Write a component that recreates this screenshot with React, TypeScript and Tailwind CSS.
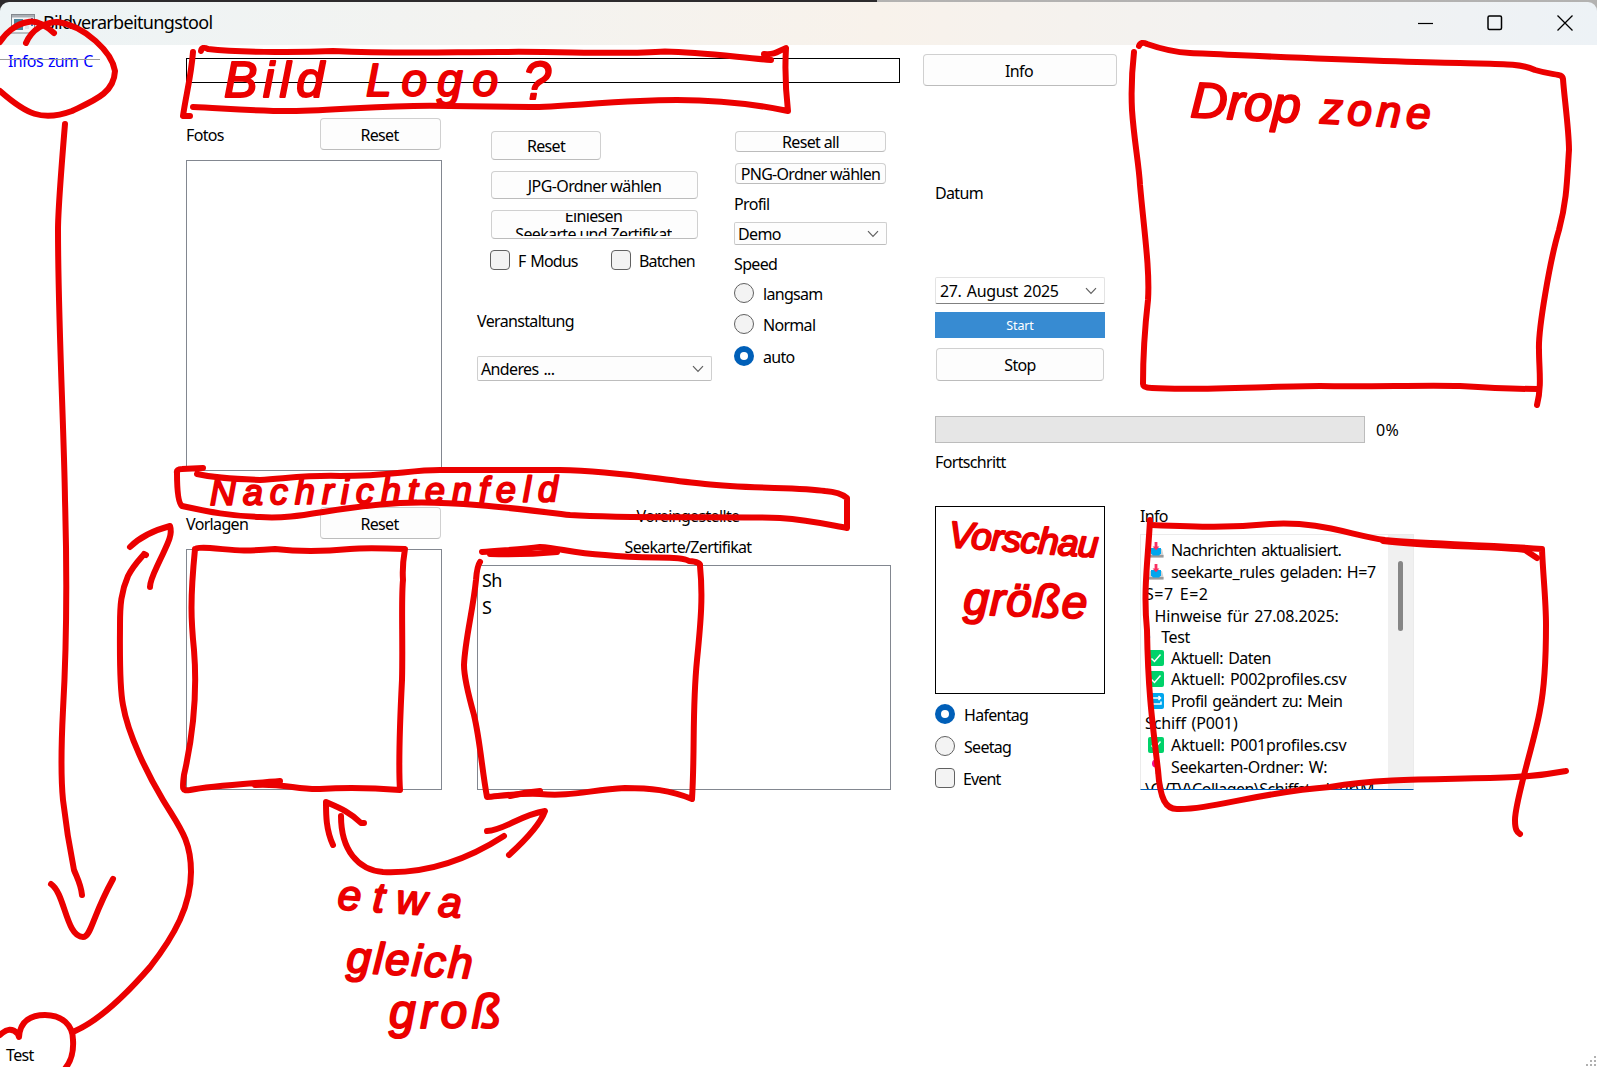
import React from "react";

function Btn({ className = "", children }: { className?: string; children: React.ReactNode }) {
  return (
    <button
      className={`flex items-center justify-center overflow-hidden whitespace-nowrap rounded-[4px] border border-[#d0d0d0] border-b-[#bcbcbc] bg-[#fdfdfd] ${className}`}
    >
      {children}
    </button>
  );
}

function Label({ className = "", children }: { className?: string; children: React.ReactNode }) {
  return <div className={`h-5 whitespace-nowrap leading-5 ${className}`}>{children}</div>;
}

function Chevron() {
  return (
    <svg width="12" height="8" viewBox="0 0 12 8" fill="none" stroke="#606060" strokeWidth="1.2">
      <path d="M1 1.2 6 6.4 11 1.2" />
    </svg>
  );
}

function Combo({ className = "", children }: { className?: string; children: React.ReactNode }) {
  return (
    <div
      className={`flex items-center justify-between whitespace-nowrap rounded-[2px] border border-[#cfcfcf] border-b-[#bdbdbd] bg-[#fdfdfd] pl-[3px] pr-[7px] ${className}`}
    >
      <span>{children}</span>
      <Chevron />
    </div>
  );
}

function Radio({ on = false, className = "", children }: { on?: boolean; className?: string; children: React.ReactNode }) {
  return (
    <label className={`flex h-5 items-center gap-[9px] whitespace-nowrap leading-5 ${className}`}>
      {on ? (
        <span className="flex size-5 items-center justify-center rounded-full bg-[#005fb8]">
          <span className="size-2 rounded-full bg-white" />
        </span>
      ) : (
        <span className="size-5 rounded-full border border-[#616161] bg-[#f3f3f3]" />
      )}
      <span className="pt-0.5 tracking-[-0.7px]">{children}</span>
    </label>
  );
}

function Check({ className = "", children }: { className?: string; children: React.ReactNode }) {
  return (
    <label className={`flex h-5 items-center gap-2 whitespace-nowrap leading-5 ${className}`}>
      <span className="size-5 rounded-[4px] border border-[#616161] bg-[#f3f3f3]" />
      <span className="pt-0.5 tracking-[-0.85px]">{children}</span>
    </label>
  );
}

function InboxIcon() {
  return (
    <svg width="16" height="16" viewBox="0 0 16 16">
      <path d="M2 7 0.5 13v2.5h15V13L14 7z" fill="#d3d3d3" />
      <path d="M0.5 13h15v2.5H0.5z" fill="#9b9b9b" />
      <path d="M3 6h10v5.500L11 13.500H5l-2-2z" fill="#00a6ed" />
      <path d="M6.600 0h2.800v4.600h2L8 8.300 4.600 4.600h2z" fill="#f92f60" />
    </svg>
  );
}

function TickIcon() {
  return (
    <svg width="16" height="16" viewBox="0 0 16 16">
      <rect width="16" height="16" rx="2" fill="#00d26a" />
      <path d="M3.500 8.500 6.500 11.500 12.500 4.500" fill="none" stroke="#fff" strokeWidth="1.500" />
    </svg>
  );
}

function RepeatIcon() {
  return (
    <svg width="16" height="16" viewBox="0 0 16 16">
      <rect width="16" height="16" rx="2" fill="#00a6ed" />
      <path d="M3 7.500V5h9M10.500 3 12.500 5 10.500 7M13 8.500V11H4" fill="none" stroke="#fff" strokeWidth="1.500" />
    </svg>
  );
}

function PinIcon() {
  return (
    <svg width="16" height="16" viewBox="0 0 16 16">
      <path d="M7.500 8h1v7h-1z" fill="#9b9b9b" />
      <circle cx="8" cy="4.500" r="4" fill="#f70a8d" />
    </svg>
  );
}

const LOG: { icon?: React.ReactNode; text: string; h: string; t: string }[] = [
  { icon: <InboxIcon />, text: "Nachrichten aktualisiert.", h: "h-[22px]", t: "tracking-[-0.6px]" },
  { icon: <InboxIcon />, text: "seekarte_rules geladen: H=7", h: "h-[22px]", t: "tracking-[-0.4px]" },
  { text: "S=7 E=2", h: "h-[22px]", t: "tracking-[0.500px]" },
  { text: "i Hinweise für 27.08.2025:", h: "h-[22px]", t: "tracking-[-0.15px]" },
  { text: "•  Test", h: "h-[20px]", t: "tracking-[-0.4px]" },
  { icon: <TickIcon />, text: "Aktuell: Daten", h: "h-[21px]", t: "tracking-[-0.5px]" },
  { icon: <TickIcon />, text: "Aktuell: P002profiles.csv", h: "h-[22px]", t: "tracking-[-0.3px]" },
  { icon: <RepeatIcon />, text: "Profil geändert zu: Mein", h: "h-[22px]", t: "tracking-[-0.55px]" },
  { text: "Schiff (P001)", h: "h-[22px]", t: "tracking-[-0.1px]" },
  { icon: <TickIcon />, text: "Aktuell: P001profiles.csv", h: "h-[22px]", t: "tracking-[-0.3px]" },
  { icon: <PinIcon />, text: "Seekarten-Ordner: W:", h: "h-[22px]", t: "tracking-[-0.4px]" },
  { text: "\\CVTV\\Collagen\\Schiffstruktur\\M", h: "h-[22px]", t: "tracking-[-0.5px]" },
];

const STROKES = [
  // circle around the link, arrow towards the status bar
  "M26 43C32 29 45 22 58 22C85 26 112 52 115 71C114 93 95 100 72 111C42 122 26 114 0 91",
  "M54 33C45 25 36 20 28 22C15 24 5 34 0 42",
  "M65 124C62 160 58 210 58 230C58 320 64 430 65 500C67 570 67 640 63 710C61 750 61 780 63 800C67 835 71 855 74 870C79 882 81 885 82 895",
  "M51 884C65 893 66 937 83 937C91 937 92 917 113 879",
  // logo frame
  "M193 52C191 77 186 95 183 116L190 116",
  "M201 51Q202 46 208 49C235 52 290 53 333 51C400 54 450 52 500 52C560 51 620 55 665 51.500C700 52 735 57 771 60M764 54C776 55 778 51 786 48C785 65 785 85 788 111C740 101 690 98 640 101C590 103 560 107 530 107L450 106C390 104 350 110 290 111C250 111 220 108 193 107",
  // drop zone
  "M1139 46Q1141 41 1147 44Q1170 52 1190 53C1260 56 1380 62 1460 63C1500 64 1520 63 1535 70C1555 76 1562 73 1563 79C1564 95 1569 130 1569 150C1567 180 1567 200 1559 230C1550 260 1538 330 1539 350C1539 370 1542 385 1537 405",
  "M1134 52C1132 70 1131 90 1132 110C1134 140 1139 165 1140 185C1144 230 1150 270 1148 300C1144 335 1143 360 1143 384Q1143 388 1152 388C1195 391 1270 386 1320 386C1370 387 1420 385 1460 386C1490 388 1520 389 1538 389",
  // message field
  "M203 468L182 469Q176 469 177 473C177 490 178 503 182 506C210 512 230 516 260 517C300 520 330 507 400 503C450 500 520 509 570 515C630 519 720 516 780 518C810 520 830 525 847 528L847 498Q840 492 825 491C800 487 750 489 705 484C660 480 620 471 560 470L440 470C410 470 390 476 340 476C310 475 290 478 260 480C230 479 215 478 197 474",
  // curve from the status bar up to the template list
  "M75 1031C100 1020 130 990 150 967C175 935 191 905 191 872C191 840 180 828 163 800C148 775 128 735 123 705C119 685 120 640 120 625C120 605 121 592 128 576C134 564 143 556 144 554L146 555",
  "M130 547C140 537 155 530 170 526C173 535 167 545 160 560C154 573 150 580 150 587",
  "M0 1035Q10 1025 18 1034L19 1037C20 1020 32 1015 45 1015C62 1015 73 1025 73 1040C74 1055 70 1063 64 1070",
  // template frame
  "M195 549C190 600 191 620 194 650C198 700 192 740 184 775C182 790 182 791 190 790C210 786 245 784 280 781M255 785C280 783 300 790 320 789C350 787 375 788 400 790C398 760 400 720 402 680C403 640 401 600 403 580C402 565 404 555 405 549C380 548 360 548 350 549C320 552 300 552 275 549C240 552 235 550 210 548Q196 547 195 549",
  // chart list frame
  "M482 552C500 550 520 550 540 547C560 548 570 553 605 555C650 560 680 555 689 561Q701 562 700 566C703 595 701 620 697 660C692 710 695 750 692 799C670 790 650 788 625 788C590 790 570 797 540 794C520 793 500 796 487 797C482 770 480 740 474 715C467 690 464 675 464 665C465 640 473 610 476 580Q477 566 480 562",
  "M490 554Q525 555 557 552M510 796Q525 792 540 791",
  // double arrow between both lists
  "M333 845C326 830 326 815 326 802C340 808 350 812 361 823L364 823",
  "M341 816C341 850 358 870 383 872C430 874 470 858 504 836",
  "M487 831C505 830 520 815 545 811C540 825 520 845 509 855",
  // log frame
  "M1150 520C1148 560 1143 590 1147 630C1148 690 1152 720 1158 770C1160 800 1166 809 1177 809C1210 810 1260 792 1330 787C1390 777 1450 780 1515 777C1540 776 1550 774 1566 771",
  "M1151 525C1200 527 1230 528 1270 524C1320 521 1350 535 1385 540C1420 544 1480 544 1542 549C1543 575 1546 600 1546 625C1546 660 1544 690 1540 710C1535 740 1515 800 1515 820C1515 830 1517 832 1520 834",
  "M1383 541C1430 547 1500 546 1525 550L1537 558",
];

const NOTES: { t: string; x: number; y: number; w: number; s: number; r: number; fit: "spacing" | "spacingAndGlyphs" }[] = [
  { t: "Bild", x: 224, y: 97, w: 100, s: 50, r: 0, fit: "spacing" },
  { t: "Logo", x: 366, y: 96, w: 132, s: 46, r: 0, fit: "spacing" },
  { t: "?", x: 523, y: 99, w: 28, s: 54, r: 0, fit: "spacingAndGlyphs" },
  { t: "Drop", x: 1190, y: 117, w: 110, s: 50, r: 3, fit: "spacingAndGlyphs" },
  { t: "zone", x: 1320, y: 123, w: 110, s: 44, r: 3, fit: "spacing" },
  { t: "Nachrichtenfeld", x: 210, y: 505, w: 348, s: 36, r: -0.6, fit: "spacing" },
  { t: "Vorschau", x: 948, y: 547, w: 150, s: 37, r: 4, fit: "spacing" },
  { t: "größe", x: 963, y: 614, w: 124, s: 46, r: 2, fit: "spacing" },
  { t: "etwa", x: 337, y: 909, w: 124, s: 42, r: 4, fit: "spacing" },
  { t: "gleich", x: 346, y: 972, w: 126, s: 44, r: 3, fit: "spacing" },
  { t: "groß", x: 389, y: 1028, w: 112, s: 48, r: 0, fit: "spacing" },
];

function Annotations() {
  return (
    <svg className="pointer-events-none absolute inset-0" width="1597" height="1067" viewBox="0 0 1597 1067">
      <g fill="none" stroke="#eb0000" strokeWidth="6" strokeLinecap="round" strokeLinejoin="round">
        {STROKES.map((d) => (
          <path key={d} d={d} />
        ))}
      </g>
      <g
        fill="#eb0000"
        stroke="#eb0000"
        strokeWidth="2"
        strokeLinejoin="round"
        letterSpacing="0"
        fontFamily="'Liberation Sans', sans-serif"
        fontStyle="italic"
      >
        {NOTES.map((n) => (
          <text
            key={n.t}
            x={n.x}
            y={n.y}
            fontSize={n.s}
            textLength={n.w}
            lengthAdjust={n.fit}
            transform={`rotate(${n.r} ${n.x} ${n.y})`}
          >
            {n.t}
          </text>
        ))}
      </g>
    </svg>
  );
}

export default function App() {
  return (
    <div className="relative flex h-[1067px] w-[1597px] flex-col overflow-hidden bg-white font-['Noto_Sans',sans-serif] text-[16px] leading-5 tracking-[-0.65px] text-black [word-spacing:1.5px]">
      <div className="flex h-[45px] flex-col bg-linear-to-r from-[#2d2b2d] from-[54.900%] to-[#b3b2b1] to-[54.900%] pt-0.5">
        <header className="flex h-[43px] items-center rounded-t-[9px] bg-linear-to-r from-[#edf4f6] via-[#f8f2eb] via-[55%] to-[#edf2f6] pl-[11px] pr-6">
          <svg width="24" height="20" viewBox="0 0 24 20">
            <rect x="0.500" y="0.500" width="23" height="18.500" fill="#f4f6f8" stroke="#83888e" />
            <rect x="1" y="1" width="22" height="2.500" fill="#a9afb5" />
            <rect x="3" y="5" width="9" height="11" fill="#4b8299" />
            <rect x="14" y="6" width="4" height="9" fill="#dde3e8" />
            <rect x="20" y="4" width="2" height="8" fill="#4776b8" />
          </svg>
          <h1 className="ml-2 flex-1 pb-[3px] text-[18px] tracking-[-0.65px]">Bildverarbeitungstool</h1>
          <svg className="mb-0.5" width="15" height="16" viewBox="0 0 15 16" stroke="#000" strokeWidth="1.200">
            <path d="M0 8.500h15" />
          </svg>
          <svg className="mb-0.5 ml-[54px]" width="16" height="16" viewBox="0 0 16 16" fill="none" stroke="#000" strokeWidth="1.500">
            <rect x="1" y="1" width="13.500" height="13.500" rx="1.500" />
          </svg>
          <svg className="mb-0.5 ml-[54px]" width="16" height="16" viewBox="0 0 16 16" stroke="#000" strokeWidth="1.300">
            <path d="M0.500 0.500 15.500 15.500M15.500 0.500 0.500 15.500" />
          </svg>
        </header>
      </div>

      <div className="flex flex-1">
        <aside className="flex w-[186px] flex-col justify-between">
          <div className="relative mt-[10px] h-[13px] w-[100px] overflow-hidden pl-2">
            <div className="-mt-1 whitespace-nowrap text-[#0000ff]">Infos zum C</div>
            <div className="absolute left-0 top-1 h-px w-[100px] bg-[#9a9a9a]" />
          </div>
          <div className="mb-0.5 pl-[6px]">Test</div>
        </aside>

        <main className="w-[714px]">
          <div className="mt-[13px] h-[25px] border border-black" />
          <div className="mt-[35px] flex h-[353px]">
            <section className="w-[256px]">
              <div className="flex h-8 items-center justify-between pr-px">
                <Label className="pt-px">Fotos</Label>
                <Btn className="h-8 w-[121px] pr-0.5 pt-0.5">Reset</Btn>
              </div>
              <div className="mt-[10px] h-[311px] border border-[#828790]" />
            </section>
            <section className="ml-[35px] w-[235px] pt-[13px]">
              <div className="ml-[14px] w-[207px]">
                <Btn className="h-[29px] w-[110px]">Reset</Btn>
                <Btn className="mt-[11px] h-7 w-full pt-0.5 tracking-[-0.6px]">JPG-Ordner wählen</Btn>
                <Btn className="mt-[11px] h-[29px] w-full pr-0.5">
                  <span className="flex h-[23px] items-center overflow-hidden text-center leading-[18px]">
                    <span>
                      Einlesen
                      <br />
                      Seekarte und Zertifikat
                    </span>
                  </span>
                </Btn>
                <div className="-ml-px mt-[11px] flex">
                  <Check className="w-[121px]">F Modus</Check>
                  <Check>Batchen</Check>
                </div>
              </div>
              <Label className="mt-[41px]">Veranstaltung</Label>
              <Combo className="mt-[25px] h-[25px]">Anderes ...</Combo>
            </section>
            <section className="ml-[22px] w-[153px] pt-[13px]">
              <Btn className="mx-px h-[21px] w-[151px]">Reset all</Btn>
              <Btn className="mx-px mt-[11px] h-[21px] w-[151px] tracking-[-0.7px]">PNG-Ordner wählen</Btn>
              <Label className="mt-[10px]">Profil</Label>
              <Combo className="mt-2 h-[23px]">Demo</Combo>
              <Label className="mt-[9px]">Speed</Label>
              <Radio className="mt-[9px]">langsam</Radio>
              <Radio className="mt-[11px]">Normal</Radio>
              <Radio on className="mt-3">auto</Radio>
            </section>
          </div>

          <div className="mt-9 flex">
            <section className="w-[256px]">
              <div className="flex h-8 items-center justify-between pr-px">
                <Label className="pt-px">Vorlagen</Label>
                <Btn className="h-8 w-[121px] pr-0.5 pt-0.5">Reset</Btn>
              </div>
              <div className="mt-[10px] h-[241px] border border-[#828790]" />
            </section>
            <section className="ml-[35px] w-[414px]">
              <Label className="-mt-px pl-[8px] text-center">Voreingestellte</Label>
              <Label className="mt-[11px] pl-[8px] text-center">Seekarte/Zertifikat</Label>
              <div className="mt-2 h-[225px] border border-[#828790] pl-1 pt-px text-[18px] leading-[27px]">
                <div>Sh</div>
                <div>S</div>
              </div>
            </section>
          </div>
        </main>

        <section className="flex flex-1 flex-col items-start pl-[35px]">
          <Btn className="-ml-3 mt-[9px] h-8 w-[194px] pr-0.5 pt-0.5">Info</Btn>
          <Label className="mt-[97px]">Datum</Label>
          <div className="mt-[74px] flex h-[27px] w-[170px] items-center justify-between rounded-[2px] border border-[#e3e3e3] border-b-[#808080] bg-white pl-1 pr-[7px]">
            <span className="tracking-[-0.35px]">27. August 2025</span>
            <Chevron />
          </div>
          <button className="mt-2 h-[26px] w-[170px] bg-[#378bd2] pt-0.5 text-[12.500px] tracking-[-0.1px] text-white">Start</button>
          <Btn className="ml-px mt-[10px] h-[33px] w-[168px]">Stop</Btn>
          <div className="mt-[35px] flex items-center">
            <div className="h-[27px] w-[430px] border border-[#bcbcbc] bg-[#e6e6e6]" />
            <span className="ml-[11px] tracking-[0.4px]">0%</span>
          </div>
          <Label className="mt-[9px]">Fortschritt</Label>
          <div className="mt-[34px] flex">
            <div className="w-[170px]">
              <div className="h-[188px] border border-black" />
              <Radio on className="mt-[10px]">Hafentag</Radio>
              <Radio className="mt-3">Seetag</Radio>
              <Check className="mt-3">Event</Check>
            </div>
            <div className="ml-[35px] w-[274px]">
              <Label>Info</Label>
              <div className="mt-2 flex h-[256px] border border-[#ebebeb] border-b-[#005fb8]">
                <div className="flex-1 overflow-hidden pl-1 pt-1">
                  {LOG.map((l, i) => (
                    <div key={i} className={`flex items-center whitespace-pre ${l.h} ${l.t}`}>
                      {l.icon && <span className="ml-[3px] mr-[7px]">{l.icon}</span>}
                      {l.text}
                    </div>
                  ))}
                </div>
                <div className="w-[25px] bg-[#f0f0f0] pl-[10px] pt-[26px]">
                  <div className="h-[70px] w-[5px] rounded-full bg-[#868686]" />
                </div>
              </div>
            </div>
          </div>
        </section>
      </div>

      <svg className="absolute bottom-0 right-0" width="12" height="12" viewBox="0 0 12 12" fill="#b0b0b0">
        <path d="M9 1h2v2H9zM5 5h2v2H5zM9 5h2v2H9zM1 9h2v2H1zM5 9h2v2H5zM9 9h2v2H9z" />
      </svg>
      <Annotations />
    </div>
  );
}
